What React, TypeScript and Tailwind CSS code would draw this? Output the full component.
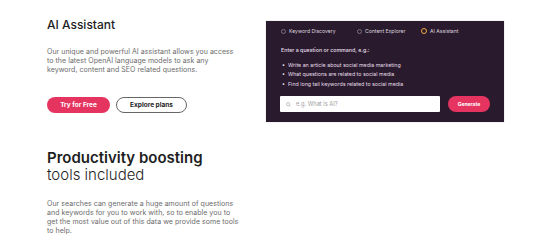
import React from "react";

const font = { fontFamily: "Inter, 'Noto Sans', sans-serif" };

function Radio({ label, active, w }: { label: string; active?: boolean; w: string }) {
  return (
    <div className={`flex items-center gap-[3px] ${w}`}>
      {active ? (
        <span className="w-[6px] h-[6px] rounded-full border-[1.5px] border-[#f2a93b] bg-[#2a1a2e] shrink-0" />
      ) : (
        <span className="w-[5px] h-[5px] rounded-full border-[0.75px] border-[#7d6f80] shrink-0" />
      )}
      <span className="text-[5.1px] leading-[8px] text-[#ddd5df]">{label}</span>
    </div>
  );
}

export default function App() {
  return (
    <div className="w-[550px] h-[244px] bg-white overflow-hidden relative" style={font}>
      <div className="flex items-start pl-[47px]">
        <div className="w-[219px] pt-[18px]">
          <h2 className="text-[12px] leading-[14px] font-medium text-[#1e1e1e]">AI Assistant</h2>
          <p className="mt-[15px] text-[7px] tracking-[0.04px] leading-[9px] text-[#6b6b6b] whitespace-nowrap">
            Our unique and powerful AI assistant allows you access
            <br />
            to the latest OpenAI language models to ask any
            <br />
            keyword, content and SEO related questions.
          </p>
          <div className="mt-[23px] flex gap-[6px]">
            <button className="w-[63px] h-[16px] rounded-full bg-[#e5345f] text-white text-[6.5px] font-bold leading-none">
              Try for Free
            </button>
            <button className="w-[71px] h-[16px] rounded-full border border-[#666] bg-white text-[#222] text-[6.5px] font-bold leading-none">
              Explore plans
            </button>
          </div>
        </div>
        <div className="mt-[21px] w-[238px] h-[101px] bg-[#2a1a2e] px-[14px] pt-[6px] shadow-[0_0_1px_rgba(0,0,0,0.3)]">
          <div className="flex items-center h-[8px] pl-[1px]">
            <Radio label="Keyword Discovery" w="w-[76px]" />
            <Radio label="Content Explorer" w="w-[64px]" />
            <Radio label="AI Assistant" active w="w-[60px]" />
          </div>
          <p className="mt-[10.5px] pl-[1px] text-[5.3px] leading-[9px] text-[#e6dfe8] font-medium">
            Enter a question or command, e.g.:
          </p>
          <ul className="mt-[6px] pl-[2px] text-[5.3px] leading-[9.5px] text-[#e6dfe8]">
            <li className="flex gap-[3px]"><span>•</span><span>Write an article about social media marketing</span></li>
            <li className="flex gap-[3px]"><span>•</span><span>What questions are related to social media</span></li>
            <li className="flex gap-[3px]"><span>•</span><span>Find long tail keywords related to social media</span></li>
          </ul>
          <div className="mt-[7px] flex items-center gap-[8px]">
            <div className="w-[163px] h-[16px] bg-white rounded-[1px] flex items-center pl-[6px] gap-[5px]">
              <svg width="5" height="5" viewBox="0 0 10 10" fill="none" stroke="#9a9a9a" strokeWidth="1.2">
                <circle cx="4.3" cy="4.3" r="3.3" />
                <path d="M6.8 6.8 9 9" />
              </svg>
              <span className="text-[5.7px] text-[#a0a0a0] leading-none">e.g. What is AI?</span>
            </div>
            <button className="w-[43px] h-[16px] rounded-full bg-[#e5345f] text-white text-[5px] font-bold leading-none">
              Generate
            </button>
          </div>
        </div>
      </div>
      <div className="pl-[47px]">
        <h2 className="mt-[26.5px] text-[15px] text-[#1e1e1e]">
          <span className="block leading-[17px] font-semibold">Productivity boosting</span>
          <span className="block leading-[17px] font-light">tools included</span>
        </h2>
        <p className="mt-[16px] text-[7px] tracking-[0.04px] leading-[9px] text-[#6b6b6b] whitespace-nowrap">
          Our searches can generate a huge amount of questions
          <br />
          and keywords for you to work with, so to enable you to
          <br />
          get the most value out of this data we provide some tools
          <br />
          to help.
        </p>
      </div>
    </div>
  );
}
